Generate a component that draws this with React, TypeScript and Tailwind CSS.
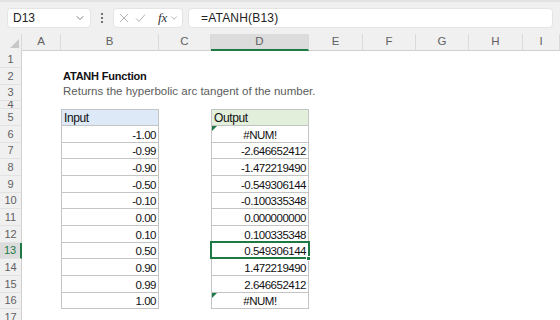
import React from 'react';
import { ChevronDown } from 'lucide-react';

const colWidths = ['w-[39px]', 'w-[98px]', 'w-[52px]', 'w-[98px]', 'w-[54px]', 'w-[53px]', 'w-[53px]', 'w-[54px]', 'w-[37px]'];
const colLetters = ['A', 'B', 'C', 'D', 'E', 'F', 'G', 'H', 'I'];

const rowHeights: Record<number, string> = {
  1: 'h-[17px]', 2: 'h-[17px]', 3: 'h-[16px]', 4: 'h-[8px]',
  5: 'h-[17px]', 6: 'h-[17px]', 7: 'h-[16px]', 8: 'h-[17px]', 9: 'h-[17px]', 10: 'h-[16px]',
  11: 'h-[17px]', 12: 'h-[17px]', 13: 'h-[16px]', 14: 'h-[17px]', 15: 'h-[17px]', 16: 'h-[16px]', 17: 'h-[17px]',
};

const inputs = ['-1.00', '-0.99', '-0.90', '-0.50', '-0.10', '0.00', '0.10', '0.50', '0.90', '0.99', '1.00'];
const outputs = ['#NUM!', '-2.646652412', '-1.472219490', '-0.549306144', '-0.100335348', '0.000000000', '0.100335348', '0.549306144', '1.472219490', '2.646652412', '#NUM!'];

const ErrorMark = () => (
  <span className="absolute top-0 left-0 w-0 h-0 border-t-[5px] border-r-[5px] border-t-[#1d7a44] border-r-transparent" />
);

const Toolbar = () => (
  <div className="h-[34px] bg-[#f0f0f0] border-t-2 border-[#e3e3e3] flex items-center px-[7px] gap-[4px] pb-[1px]">
    {/* name box */}
    <div className="w-[84px] h-[20px] bg-white rounded-[4px] border border-[#e4e4e4] flex items-center justify-between pl-[5px] pr-[4px]">
      <span className="text-[12px] text-[#222]">D13</span>
      <ChevronDown size={12} strokeWidth={1.5} className="text-[#555]" />
    </div>
    <svg width="14" height="20" viewBox="0 0 14 20" className="shrink-0">
      <circle cx="7" cy="6" r="1.1" fill="#555" />
      <circle cx="7" cy="10" r="1.1" fill="#555" />
      <circle cx="7" cy="14" r="1.1" fill="#555" />
    </svg>
    {/* fx box */}
    <div className="w-[70px] h-[20px] bg-white rounded-[4px] border border-[#e4e4e4] flex items-center pl-[5px] gap-[6px]">
      <svg width="10" height="10" viewBox="0 0 10 10">
        <path d="M1 1L9 9M9 1L1 9" stroke="#b5b5b5" strokeWidth="1" fill="none" />
      </svg>
      <svg width="11" height="10" viewBox="0 0 11 10">
        <path d="M1 5.5L4 8.5L10 1.5" stroke="#b5b5b5" strokeWidth="1" fill="none" />
      </svg>
      <span className="ml-[6px] font-['Liberation_Serif',serif] italic text-[13px] text-[#333] leading-none">fx</span>
      <ChevronDown size={10} strokeWidth={1.5} className="text-[#888] -ml-[4px]" />
    </div>
    {/* formula */}
    <div className="flex-1 h-[20px] bg-white rounded-[4px] border border-[#e4e4e4] flex items-center pl-[12px] ml-[1px]">
      <span className="text-[12px] text-[#222] tracking-[0.2px]">=ATANH(B13)</span>
    </div>
  </div>
);

const HeaderRow = () => (
  <div className="flex h-[17px] bg-[#f0f0f0] text-[11.5px] text-[#616161]">
    <div className="w-[22px] relative border-r border-[#dadada]">
      <span className="absolute right-[2px] bottom-[3px] w-0 h-0 border-b-[9px] border-l-[9px] border-b-[#c8c8c8] border-l-transparent" />
    </div>
    {colLetters.map((l, i) => (
      <div
        key={l}
        className={`${colWidths[i]} flex items-center justify-center border-r border-[#dadada] ${l === 'D' ? 'bg-[#dcdcdc] border-b-2 border-b-[#1d7a44]' : 'border-b border-b-[#d0d0d0]'}`}
      >
        {l}
      </div>
    ))}
  </div>
);

const App = () => {
  const rows = Array.from({ length: 17 }, (_, i) => i + 1);

  const renderCell = (row: number, col: number) => {
    // col index: 0=A, 1=B, 3=D
    if (row === 2 && col === 1) {
      return <span className="absolute left-[2px] bottom-[1px] whitespace-nowrap font-bold text-[11px] text-[#111] tracking-[-0.2px]">ATANH Function</span>;
    }
    if (row === 3 && col === 1) {
      return <span className="absolute left-[2px] bottom-[1px] whitespace-nowrap text-[11.5px] text-[#5c5c5c]">Returns the hyperbolic arc tangent of the number.</span>;
    }
    if (row >= 5 && row <= 16 && (col === 1 || col === 3)) {
      const isInput = col === 1;
      const borderCls = `absolute inset-0 border-l border-r border-b border-[#c4c4c4] ${row === 5 ? 'border-t' : ''}`;
      if (row === 5) {
        return (
          <div className={`${borderCls} ${isInput ? 'bg-[#dde9f6]' : 'bg-[#e2efda]'} flex items-end pl-[2px] text-[12px] leading-[14px] text-[#111] tracking-[-0.4px]`}>
            {isInput ? 'Input' : 'Output'}
          </div>
        );
      }
      const val = isInput ? inputs[row - 6] : outputs[row - 6];
      const isErr = val === '#NUM!';
      return (
        <div className={`${borderCls} bg-white flex items-end ${isErr ? 'justify-center' : 'justify-end pr-[2px]'} text-[11.5px] leading-[13px] text-[#111] tracking-[-0.5px]`}>
          {isErr && <ErrorMark />}
          {val}
          {!isInput && row === 13 && (
            <>
              <span className="absolute -left-[2px] -top-[2px] -right-[2px] -bottom-[1px] border-2 border-[#1d7a44]" />
              <span className="absolute -right-[3px] -bottom-[3px] w-[5px] h-[5px] bg-[#1d7a44] border border-white" />
            </>
          )}
        </div>
      );
    }
    return null;
  };

  return (
    <div className="w-[560px] h-[320px] overflow-hidden bg-white font-['Liberation_Sans',Arial,sans-serif]">
      <Toolbar />
      <HeaderRow />
      {rows.map((r) => (
        <div key={r} className={`flex ${rowHeights[r]}`}>
          <div
            className={`w-[22px] shrink-0 flex items-center justify-center text-[11px] ${r === 13 ? 'bg-[#dcdcdc] text-[#1d7a44] border-r-2 border-r-[#1d7a44]' : 'bg-[#f0f0f0] text-[#616161] border-r border-r-[#d0d0d0]'} border-b border-b-[#e2e2e2] overflow-hidden`}
          >
            {r}
          </div>
          {colWidths.map((w, ci) => (
            <div key={ci} className={`${w} shrink-0 relative ${ci === 3 && r === 13 ? 'z-10' : ''}`}>
              {renderCell(r, ci)}
            </div>
          ))}
        </div>
      ))}
    </div>
  );
};

export default App;
